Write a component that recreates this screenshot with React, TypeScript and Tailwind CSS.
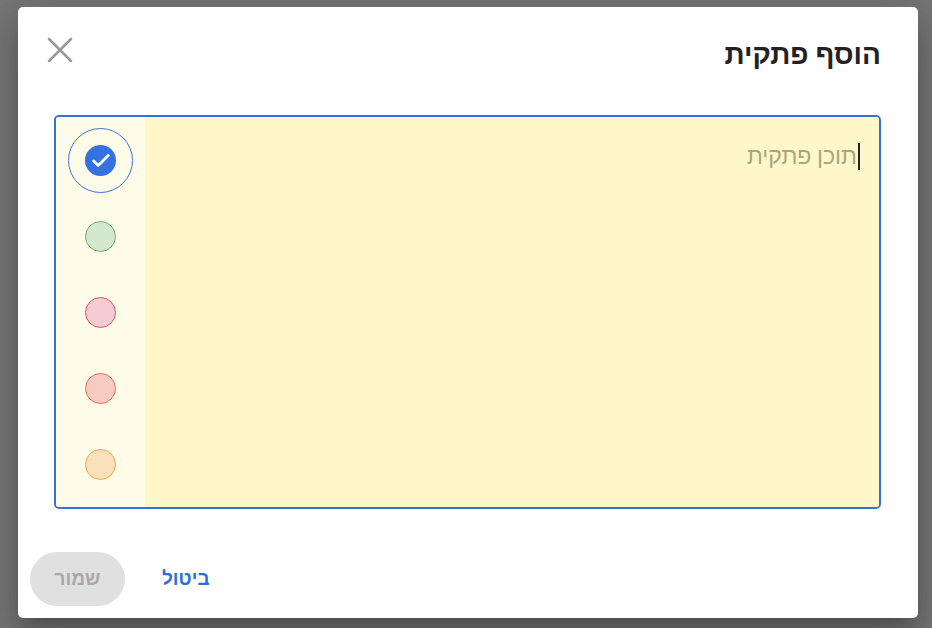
import { X, Check } from 'lucide-react'

const colors = [
  { fill: 'bg-[#d3e8cf]', border: 'border-[#6db46a]' },
  { fill: 'bg-[#f6ccd4]', border: 'border-[#d9545e]' },
  { fill: 'bg-[#f6cbc1]', border: 'border-[#ec6d55]' },
  { fill: 'bg-[#fae0bd]', border: 'border-[#f2a641]' },
]

export default function App() {
  return (
    <div
      dir="rtl"
      className="w-[932px] h-[628px] bg-[#767676] overflow-hidden flex justify-end pl-[18px] pt-[7px]"
      style={{ fontFamily: "Roboto, 'Liberation Sans', 'Noto Sans', sans-serif" }}
    >
      {/* דיאלוג */}
      <div className="w-[900px] h-[611px] bg-white rounded-[5px] shadow-[0_11px_15px_-7px_rgba(0,0,0,0.2),0_24px_38px_3px_rgba(0,0,0,0.14),0_9px_46px_8px_rgba(0,0,0,0.12)] flex flex-col">
        <div className="flex items-center justify-between pr-[37px] pl-[20px] pt-[28px] h-[68px]">
          <h1 className="text-[28px] font-semibold text-[#222] leading-none">הוסף פתקית</h1>
          <button className="text-[#9a9a9a] w-11 h-11 mb-[10px] flex items-center justify-center">
            <X size={48} strokeWidth={1.4} />
          </button>
        </div>

        <div className="mx-[36px] mr-[37px] mt-[40px] h-[394px] border-2 border-[#3470e0] rounded-[5px] flex overflow-hidden">
          <div className="flex-1 bg-[#fdf7c9] relative pt-[26px] pr-[19px]">
            <div className="flex items-center text-[23px] text-[#aca57f] leading-none">
              <span className="w-[2px] h-[27px] bg-[#222] ml-[1px]" />
              <span>תוכן פתקית</span>
            </div>
          </div>
          <div className="w-[89px] bg-[#fefce9] flex flex-col items-center pt-[11px]">
            <div className="w-[65px] h-[65px] rounded-full border border-[#3a74dc] flex items-center justify-center">
              <div className="w-[31px] h-[31px] rounded-full bg-[#3572e1] flex items-center justify-center text-white">
                <Check size={22} strokeWidth={3} />
              </div>
            </div>
            <div className="flex flex-col items-center gap-[45px] mt-[28px]">
              {colors.map((c, i) => (
                <div key={i} className={`w-[31px] h-[31px] rounded-full border-[1.5px] ${c.fill} ${c.border}`} />
              ))}
            </div>
          </div>
        </div>

        <div className="flex items-center justify-end gap-[37px] mt-auto mb-[12px] pl-[12px]">
          <button className="text-[#2f6fdb] text-[19px] font-semibold">ביטול</button>
          <button className="w-[95px] h-[54px] rounded-full bg-[#e0e0e0] text-[#a8a8a8] text-[19px] font-semibold">
            שמור
          </button>
        </div>
      </div>
    </div>
  )
}
